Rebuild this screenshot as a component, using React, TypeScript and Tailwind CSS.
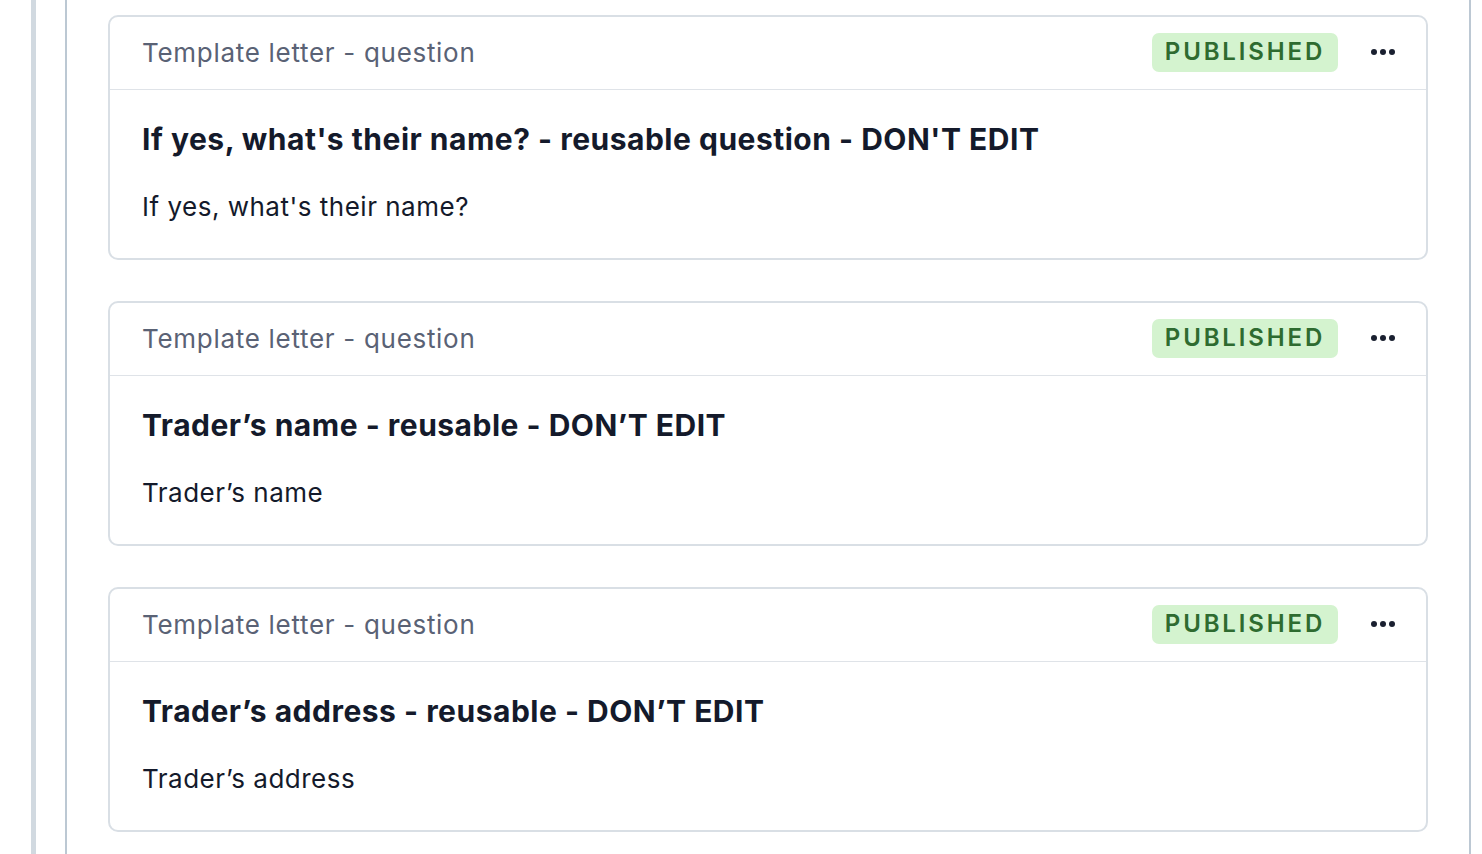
import React from "react"

const cards = [
  {
    title: "If yes, what's their name? - reusable question - DON'T EDIT",
    body: "If yes, what's their name?",
  },
  {
    title: "Trader’s name - reusable - DON’T EDIT",
    body: "Trader’s name",
  },
  {
    title: "Trader’s address - reusable - DON’T EDIT",
    body: "Trader’s address",
  },
]

function Card({ title, body }: { title: string; body: string }) {
  return (
    <div className="rounded-[10px] border-2 border-[#d9dfe5] bg-white">
      {/* Header */}
      <div className="flex h-[73px] items-center justify-between border-b border-[#dfe3e8] pb-[2px] pl-[32px] pr-[30px]">
        <span className="text-[26px] tracking-[0.7px] text-[#5a6275]">Template letter - question</span>
        <div className="flex items-center gap-[32px]">
          <span className="flex h-[39px] w-[186px] items-center justify-center rounded-[7px] bg-[#d4f3cf] text-[24px] font-semibold tracking-[0.12em] text-[#2e6b30]">
            PUBLISHED
          </span>
          <svg width="26" height="8" viewBox="0 0 26 8" className="text-[#1a2030]">
            <circle cx="4" cy="4" r="3" fill="currentColor" />
            <circle cx="13" cy="4" r="3" fill="currentColor" />
            <circle cx="22" cy="4" r="3" fill="currentColor" />
          </svg>
        </div>
      </div>

      {/* Body */}
      <div className="pl-[32px] pr-[30px] pt-[31px] pb-[35px]">
        <h2 className="text-[30px] font-bold leading-[36px] tracking-[0.5px] text-[#141a2b]">{title}</h2>
        <p className="mt-[34px] text-[26px] leading-[32px] tracking-[0.5px] text-[#141a2b]">{body}</p>
      </div>
    </div>
  )
}

export default function App() {
  return (
    <div
      className="flex h-[854px] w-[1482px] overflow-hidden bg-white"
      style={{ fontFamily: "Inter, 'Noto Sans', sans-serif" }}
    >
      <div className="ml-[31px] w-[5px] bg-[#d1d9e0]" />
      <div className="ml-[29px] w-[2px] bg-[#bcc8d3]" />
      <div className="ml-[41px] flex w-[1320px] flex-col gap-[41px] pt-[15px]">
        {cards.map((c, i) => (
          <Card key={i} title={c.title} body={c.body} />
        ))}
      </div>
      <div className="ml-[41px] w-[2px] bg-[#bcc8d3]" />
    </div>
  )
}
